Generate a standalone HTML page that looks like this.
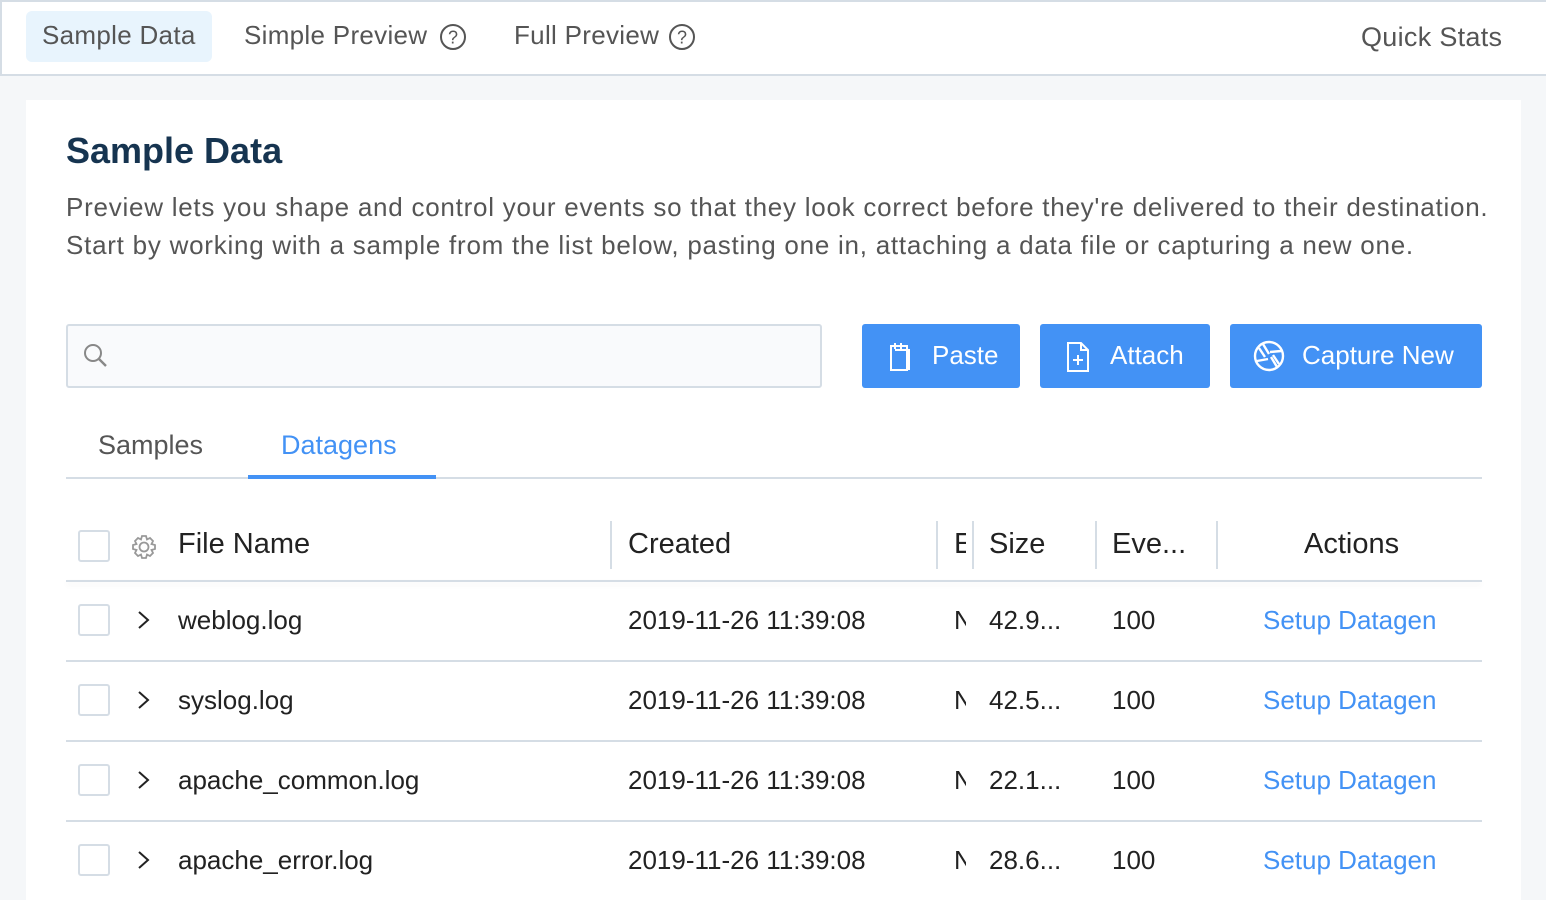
<!DOCTYPE html>
<html><head><meta charset="utf-8"><style>
*{box-sizing:border-box;margin:0;padding:0}
body{width:1546px;height:900px;overflow:hidden;background:#f5f7f9;font-family:"Liberation Sans",sans-serif;position:relative;color:#333}
.a{position:absolute;white-space:nowrap}
.nav{position:absolute;left:0;top:0;width:1546px;height:76px;background:#fff;border-top:2px solid #d5dde5;border-left:2px solid #d5dde5;border-bottom:2px solid #d5dde5}
.navt{font-size:26px;color:#555;top:20px;letter-spacing:0.3px}
.card{position:absolute;left:26px;top:100px;width:1495px;height:800px;background:#fff}
.btn{position:absolute;top:324px;height:64px;background:#4392f5;border-radius:3px;color:#fff;font-size:26px}
.btn span{position:absolute;top:16px}
.vd{position:absolute;top:521px;width:2px;height:48px;background:#d5dde5}
.hl{position:absolute;left:66px;width:1416px;height:2px;background:#d5dde5}
.cb{position:absolute;left:78px;width:32px;height:32px;border:2px solid #d5dde5;border-radius:3px}
.cell{position:absolute;font-size:26px;color:#222;white-space:nowrap}
.lnk{color:#4392f5}
.chev{position:absolute;left:136px}
</style></head><body>
<div class="nav"></div>
<div class="a" style="left:26px;top:11px;width:186px;height:51px;background:#e8f4fd;border-radius:6px"></div>
<div class="a navt" style="left:42px">Sample Data</div>
<div class="a navt" style="left:244px">Simple Preview</div>
<svg class="a" style="left:439px;top:23px" width="28" height="28" viewBox="0 0 28 28"><circle cx="14" cy="14" r="12" fill="none" stroke="#555" stroke-width="2"/><text x="14" y="20.5" font-size="18" text-anchor="middle" fill="#555" font-family="Liberation Sans">?</text></svg>
<div class="a navt" style="left:514px">Full Preview</div>
<svg class="a" style="left:668px;top:23px" width="28" height="28" viewBox="0 0 28 28"><circle cx="14" cy="14" r="12" fill="none" stroke="#555" stroke-width="2"/><text x="14" y="20.5" font-size="18" text-anchor="middle" fill="#555" font-family="Liberation Sans">?</text></svg>
<div class="a navt" style="left:1361px;top:22px;font-size:27px">Quick Stats</div>

<div class="card"></div>
<div class="a" style="left:66px;top:130px;font-size:36px;font-weight:bold;color:#163450">Sample Data</div>
<div class="a" style="left:66px;top:188px;font-size:26px;color:#555;letter-spacing:0.75px;line-height:38px">Preview lets you shape and control your events so that they look correct before they're delivered to their destination.<br>Start by working with a sample from the list below, pasting one in, attaching a data file or capturing a new one.</div>

<div class="a" style="left:66px;top:324px;width:756px;height:64px;border:2px solid #d5dde5;border-radius:3px;background:#f9fafc"></div>
<svg class="a" style="left:82px;top:342px" width="28" height="28" viewBox="0 0 28 28"><circle cx="11" cy="11" r="8" fill="none" stroke="#888" stroke-width="2"/><path d="M17 17l7 7" stroke="#888" stroke-width="2.4"/></svg>

<div class="btn" style="left:862px;width:158px"><svg style="position:absolute;left:24px;top:17px" width="28" height="32" viewBox="0 0 28 32" fill="none" stroke="#fff" stroke-width="2"><path d="M5 5h16v24H5z"/><path d="M9 9h14v20"/><path d="M9 2v6M15 2v6"/></svg><span style="left:70px">Paste</span></div>
<div class="btn" style="left:1040px;width:170px"><svg style="position:absolute;left:24px;top:16px" width="28" height="34" viewBox="0 0 28 34" fill="none" stroke="#fff" stroke-width="2"><path d="M4 3h13l7 7v21H4z"/><path d="M17 3v7h7"/><path d="M14 15v10M9 20h10"/></svg><span style="left:70px">Attach</span></div>
<div class="btn" style="left:1230px;width:252px"><svg style="position:absolute;left:22px;top:15px" width="34" height="34" viewBox="0 0 34 34" fill="none" stroke="#fff" stroke-width="2.4"><circle cx="17" cy="17" r="14"/><path d="M11 5l6 10M29 12l-11 1M25 28l-6-10M5 22l11-2M7 9l6 9M27 25l-6-9"/></svg><span style="left:72px">Capture New</span></div>

<div class="a" style="left:98px;top:430px;font-size:27px;color:#555">Samples</div>
<div class="a" style="left:281px;top:430px;font-size:27px;color:#4392f5">Datagens</div>
<div class="hl" style="top:477px"></div>
<div class="a" style="left:248px;top:475px;width:188px;height:4px;background:#4392f5"></div>

<div class="cb" style="top:530px"></div>
<svg class="a" style="left:130px;top:533px" width="28" height="28" viewBox="0 0 28 28" fill="none" stroke="#999" stroke-width="1.8"><circle cx="14" cy="14" r="4.5"/><path d="M12 3h4l1 3.5 3-1.5 3 3-1.5 3 3.5 1v4l-3.5 1 1.5 3-3 3-3-1.5-1 3.5h-4l-1-3.5-3 1.5-3-3 1.5-3L3 16v-4l3.5-1L5 8l3-3 3 1.5z"/></svg>
<div class="cell" style="left:178px;top:528px;font-size:29px">File Name</div>
<div class="vd" style="left:610px"></div>
<div class="cell" style="left:628px;top:528px;font-size:29px">Created</div>
<div class="vd" style="left:936px"></div>
<div class="cell" style="left:954px;top:528px;font-size:29px;width:12px;overflow:hidden">E</div>
<div class="vd" style="left:972px"></div>
<div class="cell" style="left:989px;top:528px;font-size:29px">Size</div>
<div class="vd" style="left:1095px"></div>
<div class="cell" style="left:1112px;top:528px;font-size:29px">Eve...</div>
<div class="vd" style="left:1216px"></div>
<div class="cell" style="left:1304px;top:528px;font-size:29px">Actions</div>
<div class="hl" style="top:580px;box-shadow:0 3px 6px rgba(0,0,0,0.06)"></div>

<svg class="chev" style="top:610px" width="16" height="20" viewBox="0 0 16 20"><path d="M3 2l9 8-9 8" fill="none" stroke="#222" stroke-width="2"/></svg>
<div class="cb" style="top:604px"></div>
<div class="cell" style="left:178px;top:605px">weblog.log</div><div class="cell" style="left:628px;top:605px">2019-11-26 11:39:08</div><div class="cell" style="left:954px;top:605px;width:12px;overflow:hidden">N</div><div class="cell" style="left:989px;top:605px">42.9...</div><div class="cell" style="left:1112px;top:605px">100</div><div class="cell lnk" style="left:1263px;top:605px">Setup Datagen</div>
<div class="hl" style="top:660px"></div>

<svg class="chev" style="top:690px" width="16" height="20" viewBox="0 0 16 20"><path d="M3 2l9 8-9 8" fill="none" stroke="#222" stroke-width="2"/></svg>
<div class="cb" style="top:684px"></div>
<div class="cell" style="left:178px;top:685px">syslog.log</div><div class="cell" style="left:628px;top:685px">2019-11-26 11:39:08</div><div class="cell" style="left:954px;top:685px;width:12px;overflow:hidden">N</div><div class="cell" style="left:989px;top:685px">42.5...</div><div class="cell" style="left:1112px;top:685px">100</div><div class="cell lnk" style="left:1263px;top:685px">Setup Datagen</div>
<div class="hl" style="top:740px"></div>

<svg class="chev" style="top:770px" width="16" height="20" viewBox="0 0 16 20"><path d="M3 2l9 8-9 8" fill="none" stroke="#222" stroke-width="2"/></svg>
<div class="cb" style="top:764px"></div>
<div class="cell" style="left:178px;top:765px">apache_common.log</div><div class="cell" style="left:628px;top:765px">2019-11-26 11:39:08</div><div class="cell" style="left:954px;top:765px;width:12px;overflow:hidden">N</div><div class="cell" style="left:989px;top:765px">22.1...</div><div class="cell" style="left:1112px;top:765px">100</div><div class="cell lnk" style="left:1263px;top:765px">Setup Datagen</div>
<div class="hl" style="top:820px"></div>

<svg class="chev" style="top:850px" width="16" height="20" viewBox="0 0 16 20"><path d="M3 2l9 8-9 8" fill="none" stroke="#222" stroke-width="2"/></svg>
<div class="cb" style="top:844px"></div>
<div class="cell" style="left:178px;top:845px">apache_error.log</div><div class="cell" style="left:628px;top:845px">2019-11-26 11:39:08</div><div class="cell" style="left:954px;top:845px;width:12px;overflow:hidden">N</div><div class="cell" style="left:989px;top:845px">28.6...</div><div class="cell" style="left:1112px;top:845px">100</div><div class="cell lnk" style="left:1263px;top:845px">Setup Datagen</div>
</body></html>
